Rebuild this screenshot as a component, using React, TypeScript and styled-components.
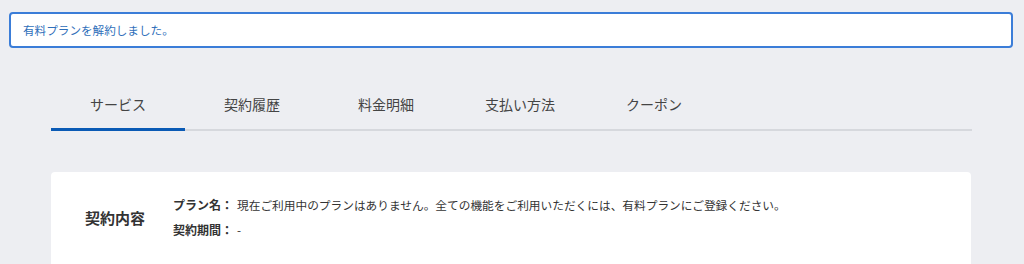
import React from 'react';
import styled, { createGlobalStyle } from 'styled-components';

const GlobalStyle = createGlobalStyle`
  body {
    margin: 0;
    background: #edeef2;
    font-family: "Noto Sans CJK JP", "Noto Sans", sans-serif;
    color: #333;
  }
`;

const Page = styled.div`
  padding: 12px 11px 0 9px;
  height: 264px;
  box-sizing: border-box;
  overflow: hidden;
`;

const Notice = styled.div`
  height: 36px;
  box-sizing: border-box;
  border: 2px solid #3b7dd8;
  border-radius: 4px;
  background: #fff;
  padding: 0 12px;
  display: flex;
  align-items: center;
  font-size: 11.6px;
  color: #2f6fba;
`;

const Content = styled.div`
  margin: 31px 41px 0 42px;
`;

const TabRow = styled.div`
  display: flex;
  border-bottom: 2px solid #d6d8dd;
`;

const Tab = styled.div<{ $active?: boolean }>`
  width: 134px;
  height: 52px;
  box-sizing: border-box;
  margin-bottom: -2px;
  border-bottom: 3px solid ${(p) => (p.$active ? '#0a5ab5' : 'transparent')};
  display: flex;
  align-items: center;
  justify-content: center;
  font-size: 14px;
  color: #444;
`;

const Card = styled.div`
  margin: 41px 1px 0 0;
  background: #fff;
  border-radius: 4px;
  padding: 23px 34px 40px;
  display: flex;
  align-items: center;
`;

const SectionTitle = styled.div`
  width: 88px;
  flex-shrink: 0;
  font-size: 15px;
  font-weight: 700;
  color: #333;
`;

const Details = styled.dl`
  margin: 0;
  display: grid;
  grid-template-columns: auto 1fr;
  column-gap: 4px;
  row-gap: 5px;
  font-size: 12px;
  line-height: 20px;
`;

const Term = styled.dt`
  font-weight: 700;
  color: #333;
`;

const Desc = styled.dd`
  margin: 0;
  font-size: 11.7px;
  color: #333;
`;

const tabs = ['サービス', '契約履歴', '料金明細', '支払い方法', 'クーポン'];

export default function App() {
  return (
    <>
      <GlobalStyle />
      <Page>
        <Notice>有料プランを解約しました。</Notice>
        <Content>
          <TabRow>
            {tabs.map((t, i) => (
              <Tab key={t} $active={i === 0}>
                {t}
              </Tab>
            ))}
          </TabRow>
          <Card>
            <SectionTitle>契約内容</SectionTitle>
            <Details>
              <Term>プラン名：</Term>
              <Desc>
                現在ご利用中のプランはありません。全ての機能をご利用いただくには、有料プランにご登録ください。
              </Desc>
              <Term>契約期間：</Term>
              <Desc>-</Desc>
            </Details>
          </Card>
        </Content>
      </Page>
    </>
  );
}
